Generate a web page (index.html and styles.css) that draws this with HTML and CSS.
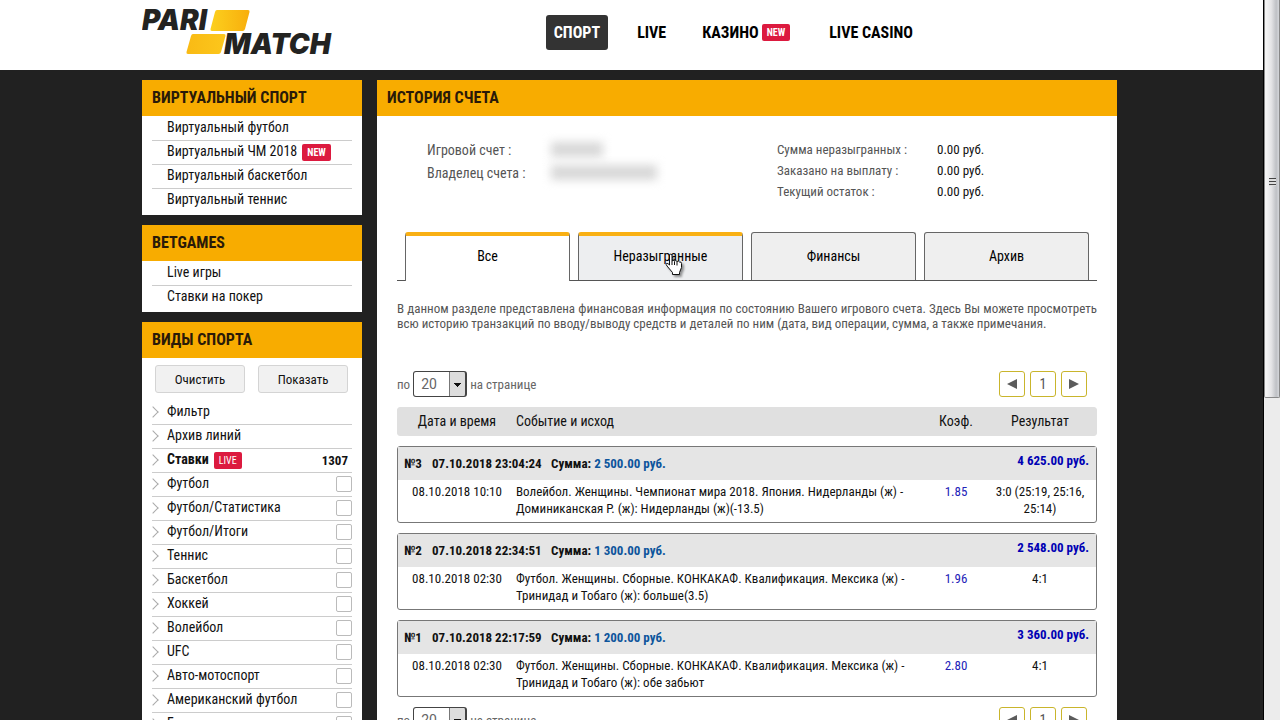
FILE: index.html
```html
<!DOCTYPE html>
<html lang="ru">
<head>
<meta charset="utf-8">
<title>Parimatch – История счета</title>
<link rel="stylesheet" href="styles.css">
</head>
<body>
<div class="screen">
<div class="page">
  <header class="top">
    <div class="container top-inner">
      <a class="logo" href="#" aria-label="Parimatch">
        <svg width="200" height="70" viewBox="0 0 200 70">
          <defs>
            <linearGradient id="gold" x1="0" y1="0" x2="1" y2="0"><stop offset="0" stop-color="#fcd01e"/><stop offset="1" stop-color="#f8ae0c"/></linearGradient>
            <linearGradient id="gold2" x1="0" y1="0" x2="1" y2="0"><stop offset="0" stop-color="#f9ba14"/><stop offset="1" stop-color="#fcc71c"/></linearGradient>
          </defs>
          <path d="M75 10h31q2 0 1.500 2l-4.500 17q-.5 2-2.500 2H70q-2 0-1.500-2l4.500-17q.5-2 2-2z" fill="url(#gold)"/>
          <path d="M51 34h31q2 0 1.500 2l-4.500 16q-.5 2-2.500 2H46q-2 0-1.500-2l4.500-16q.5-2 2-2z" fill="url(#gold2)"/>
          <text class="logo-text" x="0" y="30">PARI</text>
          <text class="logo-text" x="82" y="54">MATCH</text>
        </svg>
      </a>
      <nav class="nav">
        <a class="nav-link nav-active" href="#">СПОРТ</a>
        <a class="nav-link" href="#">LIVE</a>
        <a class="nav-link" href="#">КАЗИНО<span class="badge badge-nav">NEW</span></a>
        <a class="nav-link" href="#">LIVE CASINO</a>
      </nav>
    </div>
  </header>
  <div class="container columns">
    <aside class="sidebar">
      <section class="panel">
        <h2 class="panel-title">ВИРТУАЛЬНЫЙ СПОРТ</h2>
        <ul class="menu">
          <li class="item"><a href="#">Виртуальный футбол</a></li>
          <li class="item"><a href="#">Виртуальный ЧМ 2018</a><span class="badge">NEW</span></li>
          <li class="item"><a href="#">Виртуальный баскетбол</a></li>
          <li class="item"><a href="#">Виртуальный теннис</a></li>
        </ul>
      </section>
      <section class="panel">
        <h2 class="panel-title">BETGAMES</h2>
        <ul class="menu">
          <li class="item"><a href="#">Live игры</a></li>
          <li class="item"><a href="#">Ставки на покер</a></li>
        </ul>
      </section>
      <section class="panel">
        <h2 class="panel-title">ВИДЫ СПОРТА</h2>
        <div class="actions"><button class="btn" type="button">Очистить</button><button class="btn" type="button">Показать</button></div>
        <ul class="menu arrows">
          <li class="item"><a href="#">Фильтр</a></li>
          <li class="item"><a href="#">Архив линий</a></li>
          <li class="item strong"><a href="#">Ставки</a><span class="badge badge-live">LIVE</span><span class="count">1307</span></li>
          <li class="item"><label for="s1">Футбол</label><input class="tick" type="checkbox" id="s1"></li>
          <li class="item"><label for="s2">Футбол/Статистика</label><input class="tick" type="checkbox" id="s2"></li>
          <li class="item"><label for="s3">Футбол/Итоги</label><input class="tick" type="checkbox" id="s3"></li>
          <li class="item"><label for="s4">Теннис</label><input class="tick" type="checkbox" id="s4"></li>
          <li class="item"><label for="s5">Баскетбол</label><input class="tick" type="checkbox" id="s5"></li>
          <li class="item"><label for="s6">Хоккей</label><input class="tick" type="checkbox" id="s6"></li>
          <li class="item"><label for="s7">Волейбол</label><input class="tick" type="checkbox" id="s7"></li>
          <li class="item"><label for="s8">UFC</label><input class="tick" type="checkbox" id="s8"></li>
          <li class="item"><label for="s9">Авто-мотоспорт</label><input class="tick" type="checkbox" id="s9"></li>
          <li class="item"><label for="s10">Американский футбол</label><input class="tick" type="checkbox" id="s10"></li>
          <li class="item"><label for="s11">Биатлон</label><input class="tick" type="checkbox" id="s11"></li>
        </ul>
      </section>
    </aside>
    <main class="panel main">
      <h1 class="panel-title">ИСТОРИЯ СЧЕТА</h1>
      <div class="content">
        <div class="info">
          <dl class="account">
            <dt>Игровой счет :</dt><dd><span class="hidden-value short"></span></dd>
            <dt>Владелец счета :</dt><dd><span class="hidden-value"></span></dd>
          </dl>
          <dl class="balance">
            <dt>Сумма неразыгранных :</dt><dd>0.00 руб.</dd>
            <dt>Заказано на выплату :</dt><dd>0.00 руб.</dd>
            <dt>Текущий остаток :</dt><dd>0.00 руб.</dd>
          </dl>
        </div>
        <div class="tabs">
          <button class="tab tab-current" type="button">Все</button>
          <button class="tab tab-hover" type="button">Неразыгранные
            <svg class="cursor" width="24" height="26" viewBox="0 0 24 26"><path d="M5.500 1.500q1.500-1 2.500.5V8q1-1.500 2.500 0 1-1 2.500.5 1.500-1 2.500.5 2-.5 2 1.500v4l-2 5v2H8.500v-2L3 13q-1.500-2-.5-2.500 1.500-.5 3 1.500z" fill="#fff" stroke="#111"/><path d="M8 8v4M10.500 8.500V12M13 9v3.500" stroke="#111" fill="none"/></svg>
          </button>
          <button class="tab" type="button">Финансы</button>
          <button class="tab" type="button">Архив</button>
        </div>
        <p class="about">В данном разделе представлена финансовая информация по состоянию Вашего игрового счета. Здесь Вы можете просмотреть всю историю транзакций по вводу/выводу средств и деталей по ним (дата, вид операции, сумма, а также примечания.</p>
        <div class="pager">
          <label for="size-top">по</label>
          <select class="size" id="size-top"><option>20</option><option>50</option></select>
          <span>на странице</span>
          <span class="pages">
            <button class="page-btn" type="button" aria-label="Назад"><svg width="10" height="10" viewBox="0 0 10 10"><path d="M10 0v10L0 5z" fill="#5c5c5c"/></svg></button>
            <button class="page-btn" type="button">1</button>
            <button class="page-btn" type="button" aria-label="Вперед"><svg width="10" height="10" viewBox="0 0 10 10"><path d="M0 0v10l10-5z" fill="#5c5c5c"/></svg></button>
          </span>
        </div>
        <table class="history">
          <thead><tr class="cols"><th>Дата и время</th><th class="event">Событие и исход</th><th>Коэф.</th><th>Результат</th></tr></thead>
          <tbody class="bet">
            <tr class="bet-head"><th>№3</th><th>07.10.2018 23:04:24</th><th>Сумма: <span class="stake">2 500.00 руб.</span></th><th class="win">4 625.00 руб.</th></tr>
            <tr class="cols"><td>08.10.2018 10:10</td><td class="event">Волейбол. Женщины. Чемпионат мира 2018. Япония. Нидерланды (ж) - Доминиканская Р. (ж): Нидерланды (ж)(-13.5)</td><td class="odds">1.85</td><td>3:0 (25:19, 25:16, 25:14)</td></tr>
          </tbody>
          <tbody class="bet">
            <tr class="bet-head"><th>№2</th><th>07.10.2018 22:34:51</th><th>Сумма: <span class="stake">1 300.00 руб.</span></th><th class="win">2 548.00 руб.</th></tr>
            <tr class="cols"><td>08.10.2018 02:30</td><td class="event">Футбол. Женщины. Сборные. КОНКАКАФ. Квалификация. Мексика (ж) - Тринидад и Тобаго (ж): больше(3.5)</td><td class="odds">1.96</td><td>4:1</td></tr>
          </tbody>
          <tbody class="bet">
            <tr class="bet-head"><th>№1</th><th>07.10.2018 22:17:59</th><th>Сумма: <span class="stake">1 200.00 руб.</span></th><th class="win">3 360.00 руб.</th></tr>
            <tr class="cols"><td>08.10.2018 02:30</td><td class="event">Футбол. Женщины. Сборные. КОНКАКАФ. Квалификация. Мексика (ж) - Тринидад и Тобаго (ж): обе забьют</td><td class="odds">2.80</td><td>4:1</td></tr>
          </tbody>
        </table>
        <div class="pager">
          <label for="size-bottom">по</label>
          <select class="size" id="size-bottom"><option>20</option><option>50</option></select>
          <span>на странице</span>
          <span class="pages">
            <button class="page-btn" type="button" aria-label="Назад"><svg width="10" height="10" viewBox="0 0 10 10"><path d="M10 0v10L0 5z" fill="#5c5c5c"/></svg></button>
            <button class="page-btn" type="button">1</button>
            <button class="page-btn" type="button" aria-label="Вперед"><svg width="10" height="10" viewBox="0 0 10 10"><path d="M0 0v10l10-5z" fill="#5c5c5c"/></svg></button>
          </span>
        </div>
      </div>
    </main>
  </div>
</div>
<div class="scroll"><div class="thumb"><span class="grip"></span></div></div>
</div>
</body>
</html>
```
FILE: styles.css
```css
* { box-sizing: border-box; }
body, h1, h2, ul, dl, dd, p { margin: 0; padding: 0; }
body, button, select {
  font-family: "Roboto Condensed", "Liberation Sans Narrow", Roboto, sans-serif;
}
a { color: inherit; text-decoration: none; }
button { cursor: pointer; }

.screen { display: flex; height: 100vh; overflow: hidden; background: #212121; font-size: 14px; color: #111; }
.page { flex: 1; min-width: 0; border-right: 1px solid #000; }
.container { max-width: 979px; margin: 0 auto; padding-right: 4px; }

.top { background: #fff; }
.top-inner { display: flex; align-items: center; justify-content: space-between; height: 70px; }
.logo svg { display: block; }
.logo-text { font: italic 900 28px Inter, sans-serif; fill: #232321; }
.nav { display: flex; gap: 22px; margin: 0 197px 6px 0; }
.nav-link { display: flex; align-items: center; height: 35px; padding: 0 7px; border-radius: 3px; font-size: 16px; font-weight: 700; color: #000; }
.nav-active { padding: 0 8px; background: #333; color: #fff; }

.badge { display: inline-flex; align-items: center; height: 17px; margin-left: 5px; padding: 0 5px; border-radius: 2px; background: #dc1a3f; color: #fff; font-size: 10px; font-weight: 700; }
.badge-nav { margin: 0 3px; }
.badge-live { font-weight: 400; }

.columns { display: flex; align-items: flex-start; gap: 15px; padding-top: 10px; }
.sidebar { display: flex; flex-direction: column; gap: 10px; width: 220px; flex: none; }
.panel { background: #fff; }
.panel-title { height: 36px; padding: 0 10px; background: #f8ac00; line-height: 35px; font-size: 16px; font-weight: 700; color: #2a1a08; }
.menu { padding: 1px 10px 2px; list-style: none; }
.item { display: flex; align-items: center; height: 24px; padding: 0 0 1px 15px; border-bottom: 1px solid #ccc; font-size: 14px; }
.item a, .item label { padding-bottom: 2px; }
.item:last-child { border-bottom-color: transparent; }
.strong { font-weight: 700; }
.arrows .item { padding-left: 0; }
.arrows .item::before { content: ""; width: 7px; height: 7px; margin: 0 10px 0 -3px; border: solid #aaa; border-width: 1px 1px 0 0; transform: rotate(45deg); }
.count { margin-left: auto; padding-right: 4px; font-size: 13px; }
.tick { appearance: none; width: 16px; height: 16px; margin: 0 0 0 auto; border: 1px solid #bbb; border-radius: 2px; background: #fff; }
.actions { display: flex; gap: 13px; padding: 7px 14px 7px 13px; }
.btn { flex: 1; height: 28px; border: 1px solid #d4d4d4; border-radius: 3px; background: #f1f1f1; font-size: 13px; color: #111; }

.main { flex: 1; min-width: 0; }
.content { padding: 0 20px 20px; }
.info { display: flex; padding: 22px 0 0 30px; height: 116px; color: #555; }
.account { display: grid; grid-template-columns: 124px 226px; grid-auto-rows: 23px; line-height: 24px; font-size: 14px; }
.balance { display: grid; grid-template-columns: 160px 1fr; grid-auto-rows: 21px; line-height: 24px; font-size: 13px; }
.balance dd { color: #111; }
.hidden-value { display: block; width: 106px; height: 15px; margin-top: 4px; background: #d8d8d8; filter: blur(5px); }
.short { width: 52px; }

.tabs { display: flex; gap: 8px; padding: 0 8px; border-bottom: 1px solid #555; }
.tab { position: relative; flex: 1; height: 48px; padding: 0 0 1px; border: 1px solid #666; border-bottom: 0; border-radius: 3px 3px 0 0; background: #efefef; font-size: 14px; color: #000; }
.tab-current, .tab-hover { border-top: 4px solid #f9b014; padding-bottom: 4px; }
.tab-current { margin-bottom: -1px; padding-bottom: 5px; height: 49px; background: #fff; }
.tab-hover { background: #edeef0; }
.cursor { position: absolute; left: 85px; top: 17px; filter: drop-shadow(2px 2px 1px #0006); }

.about { margin-top: 20px; line-height: 15px; font-size: 13px; color: #555; text-align: justify; }
.pager { display: flex; align-items: center; gap: 3px; height: 26px; font-size: 13px; color: #666; }
.about + .pager { margin-top: 40px; }
.size { appearance: none; width: 54px; height: 26px; padding: 0 0 0 7px; border: 1px solid #444; border-right-width: 2px; border-radius: 3px; font: 14px Roboto, sans-serif; color: #666;
  background: linear-gradient(#111, #111) no-repeat 40px 11px / 7px 1px, linear-gradient(#111, #111) no-repeat 41px 12px / 5px 1px, linear-gradient(#111, #111) no-repeat 42px 13px / 3px 1px, linear-gradient(#111, #111) no-repeat 43px 14px / 1px 1px, linear-gradient(90deg, #fff 35px, #777 35px, #777 36px, #ddd 36px); }
.pages { display: flex; gap: 5px; margin: 0 10px 0 auto; }
.page-btn { display: grid; place-items: center; width: 26px; height: 26px; padding: 0; border: 1px solid #c9b52c; border-radius: 3px; background: #fff; font-size: 14px; color: #555; }

.history { display: block; margin: 10px 0; }
.history th, .history td { padding: 0; }
.history thead { display: block; border: 1px solid #e0e0e0; border-radius: 3px; background: #e0e0e0; }
.cols { display: grid; grid-template-columns: 118px 1fr 58px 110px; padding-right: 1px; text-align: center; }
.history thead th { line-height: 27px; font-size: 14px; font-weight: 400; }
.history .event { text-align: left; }
.bet { display: block; margin-top: 10px; border: 1px solid #777; border-radius: 3px; }
.bet-head { display: grid; grid-template-columns: 28px 119px 1fr auto; height: 33px; padding: 0 7px 0 6px; background: #e5e5e5; line-height: 33px; font-size: 13px; text-align: left; }
.stake { color: #0d559c; }
.bet-head .win { color: #0000b4; line-height: 28px; }
.bet .cols { padding-top: 3px; padding-bottom: 5px; line-height: 17px; font-size: 13px; }
.bet .odds { color: #2222b8; }

.scroll { width: 16px; background: #ececec; }
.thumb { display: flex; justify-content: center; height: 398px; padding-top: 178px; border: 1px solid #888; border-top: 0; border-radius: 0 0 2px 2px; background: linear-gradient(90deg, #f4f4f4 10%, #e4e4e6 45%, #bfc1c5 80%, #d4d6da); }
.grip { width: 7px; height: 8px; background: repeating-linear-gradient(#444 0 1px, #ddd 1px 3px); }
```
